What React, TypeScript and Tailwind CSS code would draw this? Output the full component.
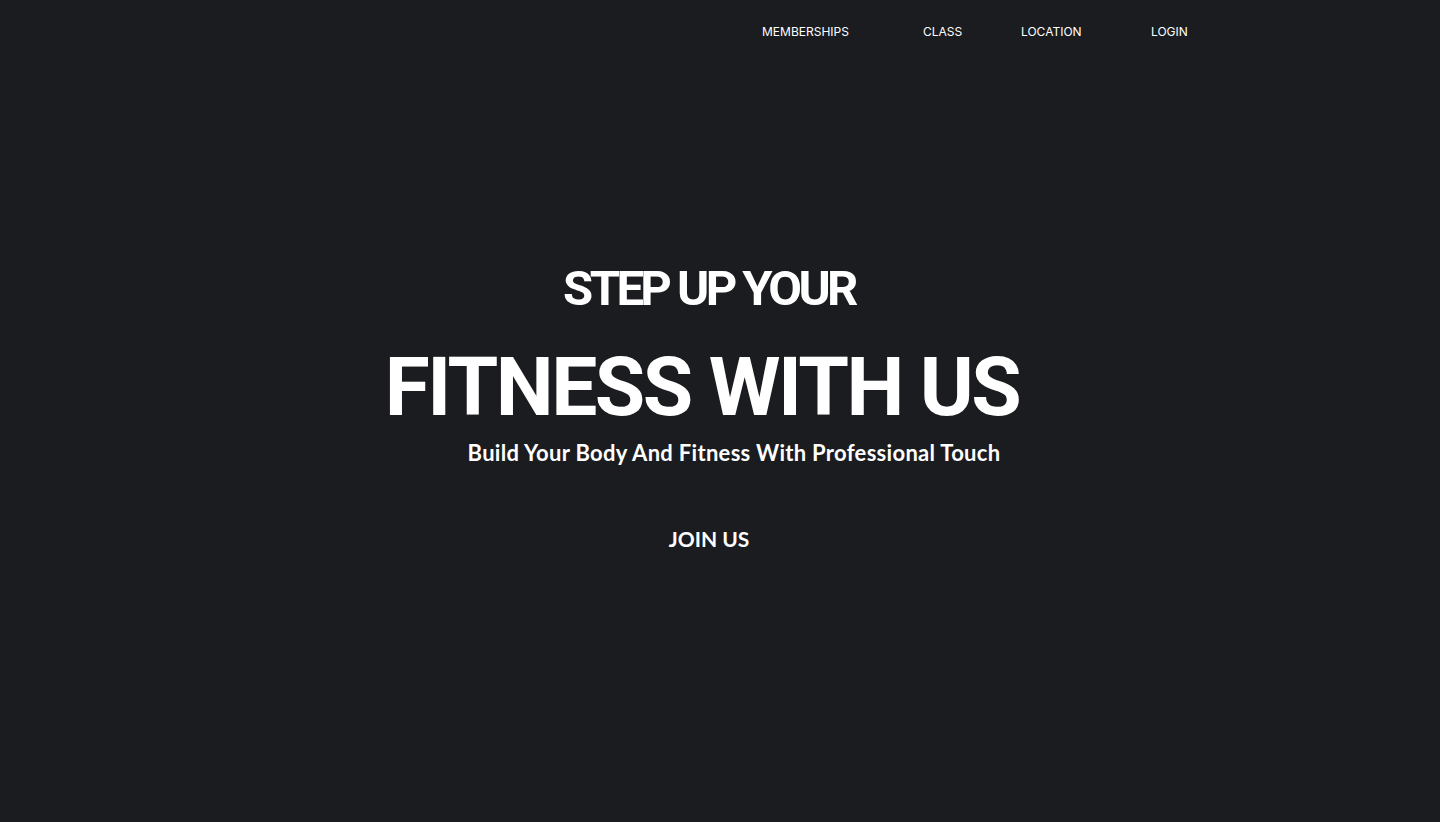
export default function App() {
  return (
    <div className="w-full h-[822px] bg-[#1a1c20] text-white overflow-hidden font-['Roboto',sans-serif]">
      {/* Navigation */}
      <nav className="flex h-[63px] items-center pl-[762px] text-[12px] font-['Inter',sans-serif]">
        <a className="w-[161px]">MEMBERSHIPS</a>
        <a className="w-[98px]">CLASS</a>
        <a className="w-[130px]">LOCATION</a>
        <a>LOGIN</a>
      </nav>

      {/* Hero */}
      <section className="flex flex-col items-center pt-[201px] pr-[22px]">
        <h2 className="text-[49px] leading-none font-bold tracking-[-3.6px]">STEP UP YOUR</h2>
        <h1 className="mt-[33px] mr-[14px] text-[82px] leading-none font-bold tracking-[-2.5px]">FITNESS WITH US</h1>
        <p className="mt-[8px] ml-[50px] text-[22px] font-bold tracking-[0.3px] font-['Lato',sans-serif]">
          Build Your Body And Fitness With Professional Touch
        </p>
        <button className="mt-[54px] text-[21px] font-bold font-['Lato',sans-serif]">JOIN US</button>
      </section>
    </div>
  );
}
